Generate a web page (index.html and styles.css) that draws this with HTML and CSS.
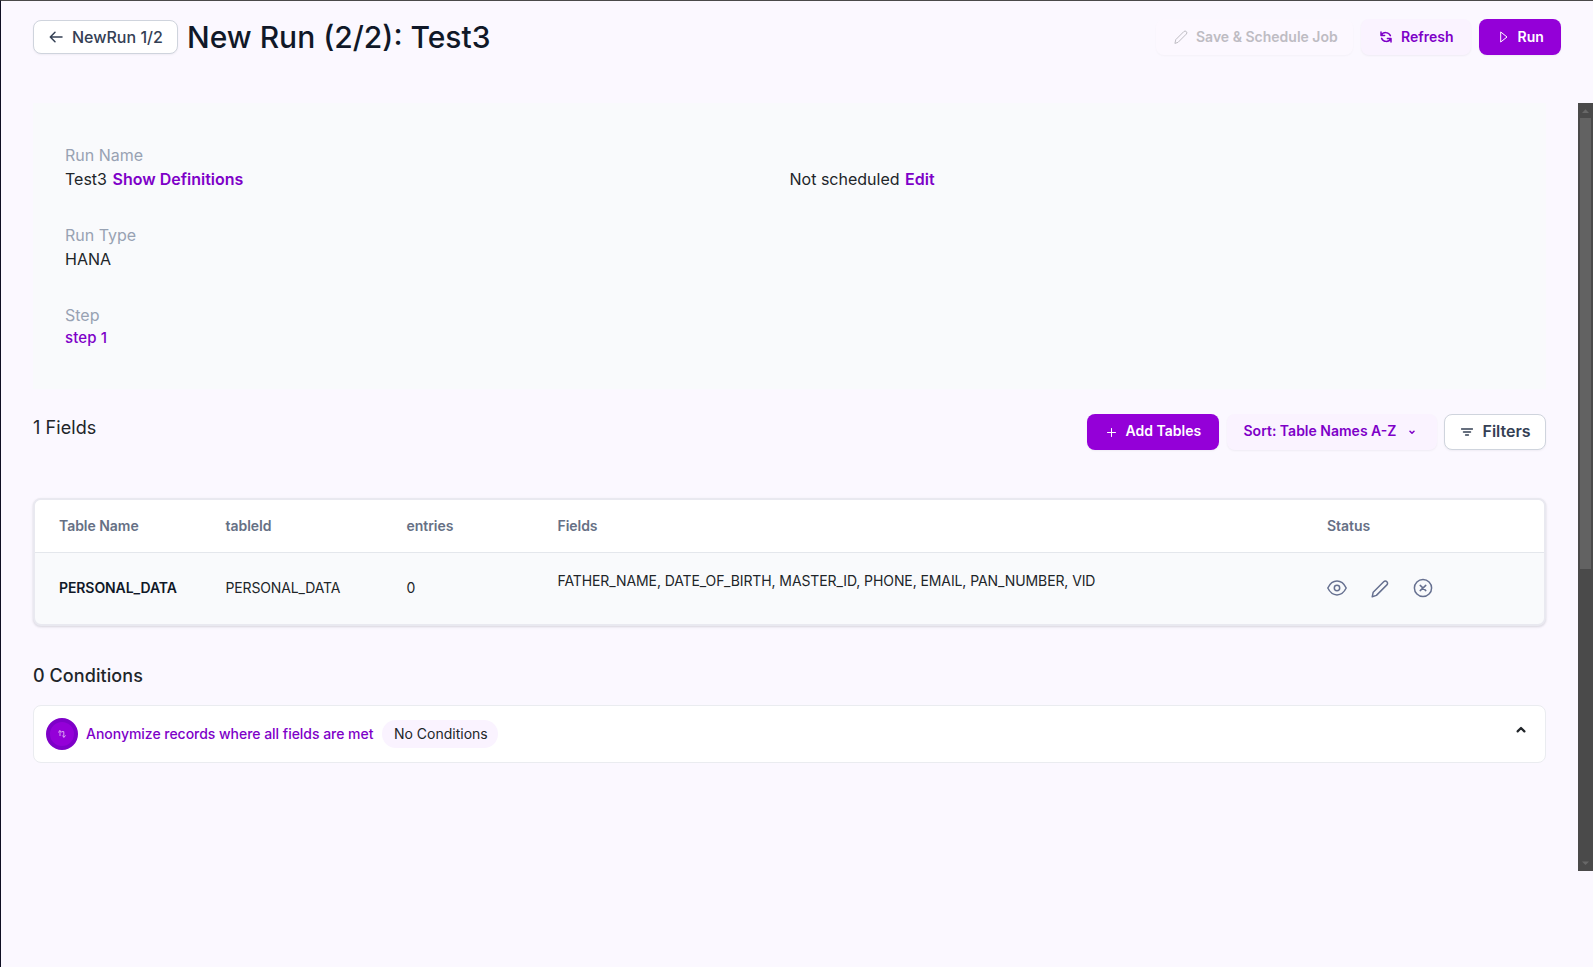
FILE: index.html
```html
<!DOCTYPE html>
<html lang="en">
<head>
<meta charset="utf-8">
<title>New Run</title>
<link rel="stylesheet" href="styles.css">
</head>
<body>
<div class="app">
  <header class="top">
    <button class="btn outline back">
      <svg class="ic-back" width="14" height="12" viewBox="0 0 14 12"><path d="M13 6H1.5M6 1.3L1.3 6L6 10.7"/></svg>
      <span>NewRun 1/2</span>
    </button>
    <h1>New Run (2/2): Test3</h1>
    <div class="actions">
      <button class="btn soft disabled save">
        <svg width="14" height="14" viewBox="0 0 14 14"><path d="M1 13L1.8 9.6L9.8 1.6a1.7 1.7 0 0 1 2.5 2.5L4.3 12.1Z"/></svg>
        <span>Save &amp; Schedule Job</span>
      </button>
      <button class="btn soft refresh">
        <svg width="12" height="12" viewBox="0 0 12 12"><path d="M1 1v3.4h3.6M1.3 4.2C3 .8 8.6.6 10.4 4.6M11 11V7.6H7.4M10.7 7.8C9 11.2 3.4 11.4 1.6 7.4"/></svg>
        <span>Refresh</span>
      </button>
      <button class="btn solid run">
        <svg width="8" height="12" viewBox="0 0 8 12"><path d="M1 1.2L7 6L1 10.8Z"/></svg>
        <span>Run</span>
      </button>
    </div>
  </header>
  <div class="scroller">
    <main class="content">
      <section class="summary">
        <dl>
          <div><dt>Run Name</dt><dd>Test3 <a>Show Definitions</a></dd></div>
          <div><dt>Run Type</dt><dd>HANA</dd></div>
          <div><dt>Step</dt><dd class="step">step 1</dd></div>
        </dl>
        <p class="schedule">Not scheduled <a>Edit</a></p>
      </section>
      <section class="fields-bar">
        <h2>1 Fields</h2>
        <div class="tools">
          <button class="btn solid add">
            <svg width="9" height="9" viewBox="0 0 9 9"><path d="M4.5 .5v8M.5 4.5h8"/></svg>
            <span>Add Tables</span>
          </button>
          <button class="btn soft sort">
            <span>Sort: Table Names A-Z</span>
            <svg width="6" height="5" viewBox="0 0 6 5"><path d="M1 1.2L3 3.2L5 1.2"/></svg>
          </button>
          <button class="btn outline filters">
            <svg width="12" height="8" viewBox="0 0 12 8"><path d="M.5 1h11M2.5 4h7M4.6 7h2.8"/></svg>
            <span>Filters</span>
          </button>
        </div>
      </section>
      <section class="table">
        <div class="row head">
          <span>Table Name</span><span>tableId</span><span>entries</span><span>Fields</span><span>Status</span>
        </div>
        <div class="row data">
          <strong>PERSONAL_DATA</strong><span class="id">PERSONAL_DATA</span><span>0</span>
          <span class="names">FATHER_NAME, DATE_OF_BIRTH, MASTER_ID, PHONE, EMAIL, PAN_NUMBER, VID</span>
          <span class="icons">
            <svg width="20" height="20" viewBox="0 0 20 20"><path d="M.8 10C3 5.600 6.500 3.100 10 3.100S17 5.600 19.200 10C17 14.400 13.500 16.900 10 16.900S3 14.400 .8 10Z"/><circle cx="10" cy="10" r="2.700"/></svg>
            <svg width="20" height="20" viewBox="0 0 20 20"><path d="M2.200 18.800L3.200 14.200L13.700 3.700a2 2 0 0 1 3.200 3.200L6.400 17.400Z"/></svg>
            <svg width="20" height="20" viewBox="0 0 20 20"><circle cx="10" cy="10" r="8.600"/><path d="M7.200 7.400L12.800 12.600M12.800 7.400L7.200 12.600"/></svg>
          </span>
        </div>
      </section>
      <h2 class="cond-title">0 Conditions</h2>
      <section class="cond">
        <span class="badge"><svg width="8" height="8" viewBox="0 0 8 8"><path d="M.4 2.200L2 .6L3.400 2.200M2 .8V5.600M4 1.600H5.800V7.200M4.600 5.800L5.800 7.200L7.400 5.800"/></svg></span>
        <span class="rule">Anonymize records where all fields are met</span>
        <span class="pill">No Conditions</span>
        <svg class="caret" width="10" height="7" viewBox="0 0 10 7"><path d="M1.600 5.400L5 2L8.400 5.400"/></svg>
      </section>
    </main>
    <div class="bar">
      <svg width="15" height="15" viewBox="0 0 15 15"><path d="M4 10L7.500 6.300L11 10Z"/></svg>
      <div class="thumb"></div>
      <svg width="15" height="15" viewBox="0 0 15 15"><path d="M4 5.500L7.500 9L11 5.500Z"/></svg>
    </div>
  </div>
</div>
</body>
</html>
```
FILE: styles.css
```css
* { box-sizing: border-box; margin: 0; padding: 0; }
body { font-family: Inter, "Liberation Sans", sans-serif; font-size: 16px; line-height: 24px; color: #212529; background: #fbf8ff; }
.app { height: 967px; border-top: 1px solid #4a4a4a; border-left: 1px solid #0f0f23; overflow: hidden; }
svg { fill: none; stroke: currentColor; stroke-width: 1.5; stroke-linecap: round; stroke-linejoin: round; flex: none; }
.top { display: flex; align-items: center; height: 102px; padding: 0 32px 30px; }
.btn { display: flex; align-items: center; height: 36px; border: 0; border-radius: 8px; font: 600 14px/20px Inter, sans-serif; white-space: nowrap; box-shadow: 0 1px 2px rgba(16, 24, 40, .05); }
.outline { background: #fff; border: 1px solid #cfd4dd; color: #344054; }
.soft { background: #faf3ff; color: #7e00c8; }
.solid { background: #9400d8; color: #fff; }
.back { width: 145px; height: 34px; padding-left: 15px; gap: 9px; font-size: 16px; font-weight: 500; }
h1 { margin-left: 9px; font-size: 30px; font-weight: 500; line-height: 38px; color: #101828; }
.actions { display: flex; gap: 8px; margin-left: auto; }
.save { width: 197px; padding-left: 18px; gap: 8px; }
.save svg { stroke-width: 1; }
.disabled { background: #fcf8ff; color: #bebcc3; box-shadow: 0 1px 2px rgba(16, 24, 40, .03); }
.refresh { width: 110px; padding-left: 19px; gap: 9px; }
.run { width: 82px; padding-left: 21px; gap: 9.5px; }
.run svg, .add svg { stroke-width: 1; }
.scroller { display: flex; height: 768px; }
.content { flex: 1; padding: 0 32px; }
.summary { display: grid; grid-template-columns: 724.5px 1fr; height: 286px; padding: 40px 32px; background: #f9fafc; }
.summary dl { display: grid; align-content: start; gap: 32px; }
.summary dt { color: #98a2b3; }
.summary a { margin-left: 1px; color: #7e00c8; font-weight: 600; }
.step { color: #7e00c8; font-size: 15px; font-weight: 500; line-height: 22px; letter-spacing: .15px; }
.schedule { padding-top: 24px; }
.fields-bar { display: flex; justify-content: space-between; margin-top: 25px; height: 84px; }
h2 { font-size: 18px; font-weight: 400; line-height: 28px; letter-spacing: .08px; }
.tools { display: flex; gap: 7.5px; }
.tools span { padding-bottom: 2px; }
.add { width: 132px; padding-left: 19.5px; gap: 10px; }
.sort { width: 210px; padding-left: 17px; gap: 13px; }
.filters { width: 102px; padding-left: 16px; gap: 9.5px; font-size: 16px; }
.table { height: 128px; border: 2px solid #e9e9f0; border-radius: 8px; background: #f9fafc; overflow: hidden; box-shadow: 0 1px 3px rgba(16, 24, 40, .1), 0 1px 2px rgba(16, 24, 40, .06); font-size: 14px; line-height: 20px; }
.row { display: grid; grid-template-columns: 166.5px 181px 151px 769.5px 1fr; align-items: center; padding-left: 24px; }
.head { height: 53px; background: #fff; border-bottom: 1px solid #e4e7ec; color: #667085; font-weight: 600; letter-spacing: -.04px; }
.data { height: 69px; }
.data strong { font-weight: 600; color: #101828; letter-spacing: -.09px; }
.id { letter-spacing: -.14px; }
.names { padding-bottom: 14px; letter-spacing: -.095px; }
.icons { display: flex; gap: 23px; margin-left: -.5px; color: #667090; }
.cond-title { margin-top: 36px; font-weight: 500; }
.cond { display: flex; align-items: center; height: 58px; margin-top: 15px; padding: 0 19px 0 12px; border: 1px solid #eaecf0; border-radius: 8px; background: #fff; font-size: 14px; }
.badge { display: grid; place-items: center; width: 32px; height: 32px; border-radius: 50%; background: #9400d8; border: 4px solid #7e00c8; color: #d9a5f2; }
.badge svg { stroke-width: 1; }
.rule { margin-left: 8px; color: #7e00c8; font-weight: 500; letter-spacing: -.03px; }
.pill { margin-left: 9px; padding: 2px 10.500px 2px 11.500px; border-radius: 14px; height: 28px; background: #faf3ff; }
.caret { margin: 0 0 9px auto; stroke-width: 2.2; }
.bar { width: 15px; background: #4a4a4a; display: flex; flex-direction: column; color: #686868; }
.bar svg { fill: currentColor; stroke: none; }
.thumb { width: 11px; height: 451px; margin: 0 auto auto; background: #626262; }
```
